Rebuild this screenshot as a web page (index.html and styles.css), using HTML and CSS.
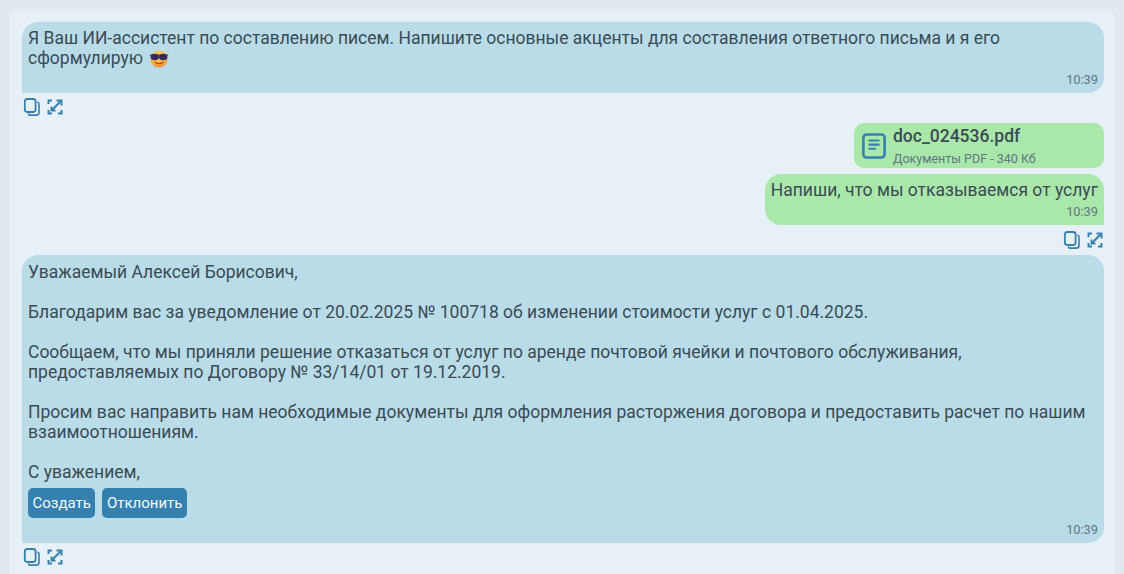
FILE: index.html
```html
<!DOCTYPE html>
<html lang="ru">
<head>
<meta charset="utf-8">
<title>Чат</title>
<link rel="stylesheet" href="styles.css">
</head>
<body>
<main class="panel">
  <section class="group intro">
    <div class="bubble bot">
      <p class="text">Я Ваш ИИ-ассистент по составлению писем. Напишите основные акценты для составления ответного письма и я его сформулирую <svg class="emoji" viewBox="0 0 20 20" aria-hidden="true"><defs><radialGradient id="face" cx="0.45" cy="0.3" r="0.75"><stop offset="0" stop-color="#ffd75e"/><stop offset="0.65" stop-color="#fbb040"/><stop offset="1" stop-color="#f07f3c"/></radialGradient></defs><circle cx="10" cy="10" r="8.6" fill="url(#face)"/><path d="M0.8 6.2h18.4" stroke="#5a3f86" stroke-width="1.2"/><ellipse cx="5.8" cy="8" rx="4.2" ry="3.2" fill="#352b5e"/><ellipse cx="14.2" cy="8" rx="4.2" ry="3.2" fill="#352b5e"/><path d="M6.2 13.2q3.8 3 7.6 0" fill="none" stroke="#a8471f" stroke-width="1.3" stroke-linecap="round"/></svg></p>
      <div class="time">10:39</div>
    </div>
    <div class="actions">
      <svg class="icon" viewBox="0 0 18 18"><use href="#copy"/></svg>
      <svg class="icon" viewBox="0 0 18 18"><use href="#expand"/></svg>
    </div>
  </section>

  <section class="group user">
    <div class="bubble file">
      <svg class="doc" viewBox="0 0 26 28" aria-hidden="true"><rect x="1.5" y="1.5" width="23" height="25" rx="3.5" fill="none" stroke="#3481b0" stroke-width="2.8"/><path d="M7 8h12M7 12.5h12M7 17h8" stroke="#3481b0" stroke-width="2.2"/></svg>
      <div class="file-info">
        <div class="file-name">doc_024536.pdf</div>
        <div class="file-meta">Документы PDF - 340 Кб</div>
      </div>
    </div>
    <div class="bubble me">
      <p class="text">Напиши, что мы отказываемся от услуг</p>
      <div class="time">10:39</div>
    </div>
    <div class="actions">
      <svg class="icon" viewBox="0 0 18 18"><use href="#copy"/></svg>
      <svg class="icon" viewBox="0 0 18 18"><use href="#expand"/></svg>
    </div>
  </section>

  <section class="group">
    <div class="bubble bot letter">
      <p class="text">Уважаемый Алексей Борисович,</p>
      <p class="text para">Благодарим вас за уведомление от 20.02.2025 № 100718 об изменении стоимости услуг с 01.04.2025.</p>
      <p class="text para">Сообщаем, что мы приняли решение отказаться от услуг по аренде почтовой ячейки и почтового обслуживания, предоставляемых по Договору № 33/14/01 от 19.12.2019.</p>
      <p class="text para">Просим вас направить нам необходимые документы для оформления расторжения договора и предоставить расчет по нашим взаимоотношениям.</p>
      <p class="text para">С уважением,</p>
      <div class="buttons">
        <button class="btn">Создать</button>
        <button class="btn">Отклонить</button>
      </div>
      <div class="time">10:39</div>
    </div>
    <div class="actions">
      <svg class="icon" viewBox="0 0 18 18"><use href="#copy"/></svg>
      <svg class="icon" viewBox="0 0 18 18"><use href="#expand"/></svg>
    </div>
  </section>
</main>

<svg class="defs" aria-hidden="true">
  <symbol id="copy" viewBox="0 0 18 18">
    <rect x="1.8" y="1" width="10.8" height="13" rx="2.4" fill="none" stroke="#3481b0" stroke-width="1.8"/>
    <path d="M15 4.4a1.5 1.5 0 0 1 1 1.5v8.6a2.6 2.6 0 0 1-2.6 2.6H7a1.6 1.6 0 0 1-1.5-1" fill="none" stroke="#3481b0" stroke-width="1.6" stroke-linecap="round"/>
  </symbol>
  <symbol id="expand" viewBox="0 0 18 18">
    <path d="M6 2.5H2.5V6M6 15.5H2.5V12M15.5 12v3.5H12" fill="none" stroke="#3481b0" stroke-width="2"/>
    <path d="M10.5 2.5h5V7.5" fill="none" stroke="#3481b0" stroke-width="2"/>
    <path d="M5.5 12.5l9-9" fill="none" stroke="#3481b0" stroke-width="2"/>
    <path d="M5.5 8.5v4h4" fill="none" stroke="#3481b0" stroke-width="1.8"/>
  </symbol>
</svg>
</body>
</html>
```

FILE: styles.css
```css
* { box-sizing: border-box; }

html, body { height: 100%; }

body {
  margin: 0;
  padding: 9px 9px 0;
  overflow: hidden;
  background: #e0e9f0;
  font-family: Roboto, "Liberation Sans", sans-serif;
  color: #3a4b55;
}

.panel {
  height: 100%;
  padding: 13px 11px 0 13px;
  background: #e7f0f7;
  border-radius: 10px 10px 0 0;
  display: flex;
  flex-direction: column;
  gap: 5px;
}

.group {
  display: flex;
  flex-direction: column;
  align-items: flex-start;
}

.group.intro { margin-bottom: 1px; }

.group.user { align-items: flex-end; }

.bubble {
  padding: 6px;
}

.bot {
  width: 100%;
  background: #badbe8;
  border-radius: 16px 16px 16px 0;
}

.letter { padding-top: 7px; }

.me {
  background: #aae8aa;
  border-radius: 16px 16px 0 16px;
  margin-top: 6px;
}

.text {
  margin: 0;
  font-size: 17.5px;
  line-height: 20px;
}

.para { margin-top: 20px; }

.time {
  margin-top: 5px;
  text-align: right;
  font-size: 12.8px;
  line-height: 14px;
  color: #5f7584;
}

.emoji {
  width: 20px;
  height: 20px;
  margin: -4px 0 -4px 2px;
  vertical-align: middle;
}

.actions {
  display: flex;
  gap: 5px;
  margin-top: 4px;
  height: 20px;
  padding-left: 1px;
  align-items: center;
}

.user .actions { padding: 0; margin-top: 5px; }

.icon { width: 18px; height: 18px; }

.file {
  display: flex;
  align-items: center;
  gap: 7px;
  width: 250px;
  height: 45px;
  padding: 0 8px;
  background: #aae8aa;
  border-radius: 10px;
}

.doc { width: 24px; height: 28px; flex: none; }

.file-name {
  font-size: 17.5px;
  font-weight: 500;
  line-height: 22px;
}

.file-meta {
  font-size: 12.5px;
  line-height: 16px;
  color: #5f7584;
  margin-top: 4px;
}

.buttons {
  display: flex;
  gap: 7px;
  margin-top: 6px;
}

.btn {
  height: 30px;
  padding: 0 4.5px;
  border: 0;
  border-radius: 5px;
  background: #3481b0;
  color: #f4fafd;
  font: 400 15px Roboto, "Liberation Sans", sans-serif;
}

.defs { display: none; }
```
